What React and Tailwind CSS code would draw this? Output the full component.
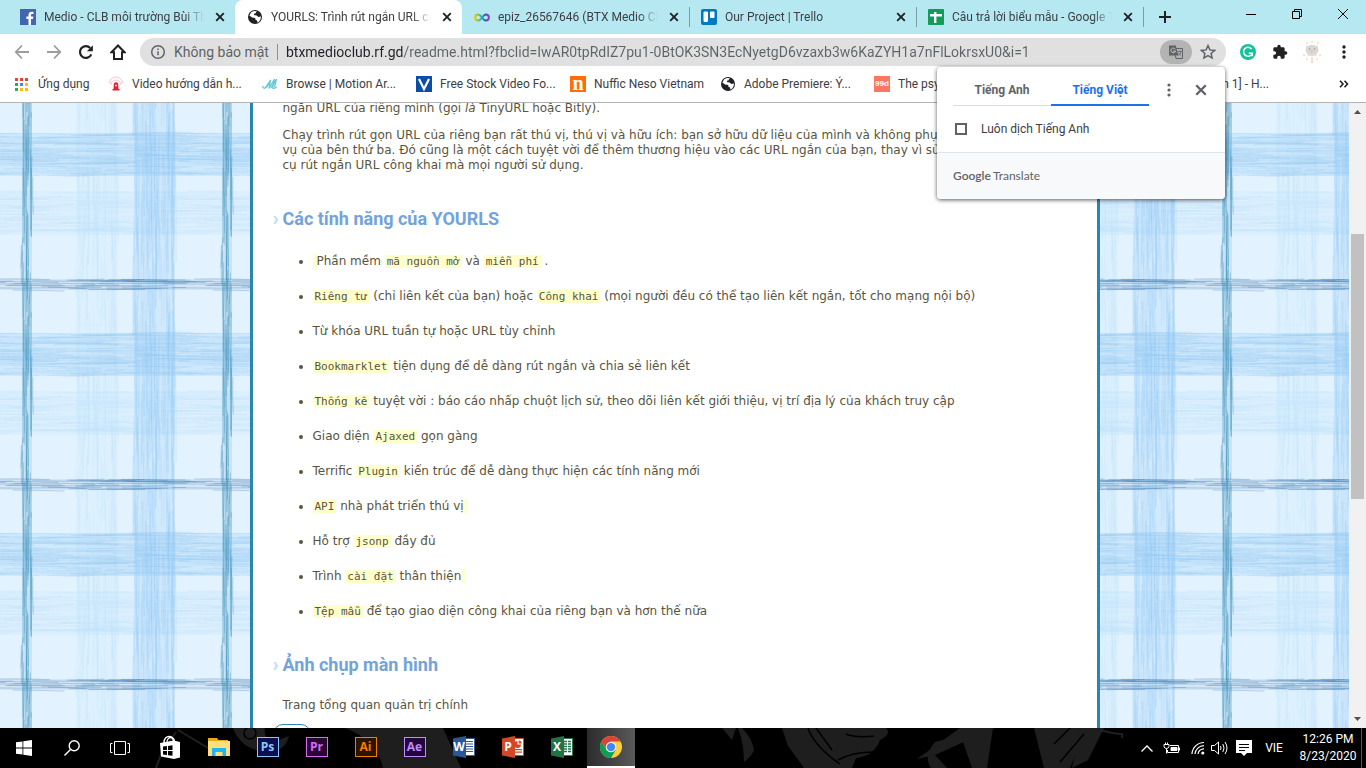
import React from 'react';

const UI = "font-['Roboto','Noto_Sans',sans-serif]";

/* ---------- plaid page background ---------- */

function makeRandom(seed) {
  let s = seed;
  return () => {
    s = (s * 16807) % 2147483647;
    return s / 2147483647;
  };
}

const BANDS = [
  { vertical: false, from: 88, to: 132, color: '#b8e0fc', count: 90, opacity: 0.18, width: 1.4, base: 0.16 },
  { vertical: true, from: 76, to: 118, color: '#b8e0fc', count: 80, opacity: 0.2, width: 1.4, base: 0.12 },
  { vertical: false, from: 30, to: 73, color: '#8ac3f0', count: 170, opacity: 0.18, width: 1.2, base: 0.22 },
  { vertical: true, from: 134, to: 175, color: '#8ac3f0', count: 150, opacity: 0.19, width: 1.3, base: 0.2 },
  { vertical: false, from: 176, to: 187, color: '#4a82b4', count: 34, opacity: 0.32, width: 1.1, base: 0.1 },
  { vertical: true, from: 22, to: 32, color: '#3a90ba', count: 34, opacity: 0.34, width: 1.2, base: 0.14 },
];

function buildStrokes() {
  const rand = makeRandom(4217);
  const out = [];
  BANDS.forEach((b, bi) => {
    for (let i = 0; i < b.count; i++) {
      const start = rand() * 200;
      const len = 30 + rand() * 60;
      const across = b.from + rand() * (b.to - b.from);
      const drift = (rand() - 0.5) * 3;
      const mid = across + drift / 2 + (rand() - 0.5) * 2;
      const wave = Math.sin((start / 200) * Math.PI * 2);
      [0, -200].forEach((shift) => {
        const a = start + shift;
        const c = across + wave;
        const d = b.vertical
          ? `M${c} ${a}Q${mid + wave} ${a + len / 2} ${c + drift} ${a + len}`
          : `M${a} ${c}Q${a + len / 2} ${mid + wave} ${a + len} ${c + drift}`;
        out.push({ key: `${bi}-${i}-${shift}`, d, b });
      });
    }
  });
  return out;
}

const STROKES = buildStrokes();

function Plaid() {
  return (
    <svg className="absolute inset-0 h-full w-full" aria-hidden="true">
      <defs>
        <pattern id="plaid" width="200" height="200" patternUnits="userSpaceOnUse">
          <rect width="200" height="200" fill="#e2f2ff" />
          {BANDS.map((b, i) =>
            b.vertical ? (
              <rect key={i} x={b.from} y="0" width={b.to - b.from} height="200" fill={b.color} opacity={b.base} />
            ) : (
              <rect key={i} x="0" y={b.from} width="200" height={b.to - b.from} fill={b.color} opacity={b.base} />
            )
          )}
          {STROKES.map((s) => (
            <path key={s.key} d={s.d} fill="none" stroke={s.b.color} strokeWidth={s.b.width} opacity={s.b.opacity} />
          ))}
        </pattern>
      </defs>
      <rect width="100%" height="100%" fill="url(#plaid)" />
    </svg>
  );
}

/* ---------- small icons ---------- */

function Globe() {
  return (
    <svg viewBox="0 0 16 16" className="size-4 shrink-0" aria-hidden="true">
      <circle cx="8" cy="8" r="7" fill="#202124" />
      <path d="M4.2 3.2C6 2 8.6 1.8 10 2.4L9.6 4 7.4 4.6 6.8 6 9.6 6.6 11.4 8 14 7.6C14 10 13 12.6 10.6 13.8L10 11.6 8.4 10.8 8.2 9 5 8.4 2.4 6.6Z" fill="#fff" />
      <path d="M8.6 2.2l2.6 1.2 1.6 2.4-2.6.4-1-1.6zM2.2 8.6l2.4 1.6 1.2 3.2-2.4-1.6z" fill="#202124" />
    </svg>
  );
}

function Facebook() {
  return (
    <svg viewBox="0 0 16 16" className="size-4 shrink-0" aria-hidden="true">
      <rect width="16" height="16" fill="#4267b2" />
      <path d="M11 16V10h2l.4-2.4H11V6.200c0-.8.4-1.200 1.200-1.200h1.300V2.900c-.4 0-1-.1-1.700-.1-2 0-3.300 1.200-3.300 3.200v1.600H6.400V10h2.100v6z" fill="#fff" />
    </svg>
  );
}

function Infinity() {
  return (
    <svg viewBox="0 0 16 16" className="size-4 shrink-0" aria-hidden="true">
      <defs>
        <linearGradient id="inf" x1="0" x2="1">
          <stop offset="0" stopColor="#f2c500" />
          <stop offset=".25" stopColor="#7cc142" />
          <stop offset=".5" stopColor="#18a8d8" />
          <stop offset=".75" stopColor="#3b4fb0" />
          <stop offset="1" stopColor="#a03cc0" />
        </linearGradient>
      </defs>
      <path d="M8 8.500C6.800 6.600 5.600 5.400 4.200 5.400a3 3 0 0 0 0 6.200C5.600 11.600 6.800 10.400 8 8.500s2.400-3.100 3.800-3.100a3 3 0 0 1 0 6.200C10.400 11.600 9.200 10.400 8 8.500z" fill="none" stroke="url(#inf)" strokeWidth="2" />
    </svg>
  );
}

function Trello() {
  return (
    <svg viewBox="0 0 16 16" className="size-4 shrink-0" aria-hidden="true">
      <rect width="16" height="16" rx="2" fill="#0079bf" />
      <rect x="2.500" y="2.500" width="4.500" height="10.500" rx="1" fill="#fff" />
      <rect x="9" y="2.500" width="4.500" height="6.500" rx="1" fill="#fff" />
    </svg>
  );
}

function Sheets() {
  return (
    <svg viewBox="0 0 16 16" className="size-4 shrink-0" aria-hidden="true">
      <rect width="16" height="16" rx="1" fill="#0f9d58" />
      <path d="M2 5h12v2.400H8.400V14H6V7.400H2zM6 3h2.400v3H6z" fill="#fff" />
    </svg>
  );
}

const CloseX = ({ className = 'size-4' }) => (
  <svg viewBox="0 0 16 16" className={className} fill="none" stroke="currentColor" strokeWidth="1.900" aria-hidden="true">
    <path d="M4.200 4.200l7.600 7.600M11.800 4.200l-7.600 7.600" />
  </svg>
);

/* ---------- tab strip ---------- */

const TABS = [
  { title: 'Medio - CLB môi trường Bùi Thị Xuân', Icon: Facebook },
  { title: 'YOURLS: Trình rút ngắn URL của riêng bạn', Icon: Globe, active: true },
  { title: 'epiz_26567646 (BTX Medio Club)', Icon: Infinity },
  { title: 'Our Project | Trello', Icon: Trello, divider: true },
  { title: 'Câu trả lời biểu mẫu - Google Trang tính', Icon: Sheets, divider: true },
];

function Tab({ title, Icon, active, divider }) {
  return (
    <div
      className={
        'relative flex h-full w-[227px] items-center gap-2 pr-[7px] pl-3 ' +
        (active ? 'rounded-t-lg bg-white' : 'bg-transparent')
      }
    >
      {divider && <span className="absolute left-0 h-5 w-px bg-[#7f9ca3]" />}
      <Icon />
      <span className="min-w-0 flex-1 overflow-hidden text-xs whitespace-nowrap text-[#3c4043] [mask-image:linear-gradient(to_right,black_88%,transparent)]">
        {title}
      </span>
      <button type="button" aria-label="Đóng thẻ" className="text-[#202124]">
        <CloseX />
      </button>
    </div>
  );
}

function TabStrip() {
  return (
    <div className="flex h-[34px] shrink-0 bg-[#b6e8f2]">
      <div className="flex pl-2">
        {TABS.map((t) => (
          <Tab key={t.title} {...t} />
        ))}
      </div>
      <span className="h-5 w-px self-center bg-[#7f9ca3]" />
      <button type="button" aria-label="Thẻ mới" className="flex w-[42px] items-center justify-center">
        <svg viewBox="0 0 14 14" className="size-3.5" stroke="#202124" strokeWidth="2" aria-hidden="true">
          <path d="M7 1v12M1 7h12" />
        </svg>
      </button>
      <div className="ml-auto flex pb-1.5">
        <button type="button" aria-label="Thu nhỏ" className="flex w-[46px] items-center justify-center">
          <svg viewBox="0 0 10 10" className="size-2.5" stroke="#000" aria-hidden="true"><path d="M0 5.500h10" /></svg>
        </button>
        <button type="button" aria-label="Khôi phục" className="flex w-[46px] items-center justify-center">
          <svg viewBox="0 0 10 10" className="size-2.5" fill="none" stroke="#000" aria-hidden="true">
            <path d="M.5 2.500h7v7h-7zM2.500 2.500v-2h7v7h-2" />
          </svg>
        </button>
        <button type="button" aria-label="Đóng" className="flex w-[46px] items-center justify-center">
          <svg viewBox="0 0 10 10" className="size-2.5" stroke="#000" aria-hidden="true"><path d="M0 0l10 10M10 0L0 10" /></svg>
        </button>
      </div>
    </div>
  );
}

/* ---------- toolbar ---------- */

function NavButton({ label, children }) {
  return (
    <button type="button" aria-label={label} className="flex size-8 items-center justify-center">
      {children}
    </button>
  );
}

function Toolbar() {
  return (
    <div className="flex h-9 shrink-0 items-center bg-white px-[6px]">
      <NavButton label="Quay lại">
        <svg viewBox="0 0 16 16" className="size-4" fill="none" stroke="#9b9c9e" strokeWidth="1.800" aria-hidden="true"><path d="M15 8H2.500M8 1.500L1.800 8 8 14.500" /></svg>
      </NavButton>
      <NavButton label="Tiến">
        <svg viewBox="0 0 16 16" className="size-4" fill="none" stroke="#9b9c9e" strokeWidth="1.800" aria-hidden="true"><path d="M1 8h12.500M8 1.500L14.200 8 8 14.500" /></svg>
      </NavButton>
      <NavButton label="Tải lại">
        <svg viewBox="0 0 16 16" className="size-4" fill="none" stroke="#202124" strokeWidth="2.200" aria-hidden="true">
          <path d="M13.300 10.400A5.900 5.900 0 1 1 12.200 4" />
          <path d="M14.900 1.200v6H8.900z" fill="#202124" stroke="none" />
        </svg>
      </NavButton>
      <NavButton label="Trang chủ">
        <svg viewBox="0 0 16 16" className="size-4" fill="none" stroke="#202124" strokeWidth="2" aria-hidden="true"><path d="M8 1.500L1.400 8.300H4V15h8V8.300h2.600z" /></svg>
      </NavButton>
      <div className="ml-[6px] flex h-7 min-w-0 flex-1 items-center rounded-full bg-[#e0e0e0] pr-[2px] pl-[10px] text-sm whitespace-nowrap text-[#5f6368]">
        <svg viewBox="0 0 16 16" className="size-4 shrink-0" fill="none" stroke="#5f6368" strokeWidth="1.500" aria-hidden="true">
          <circle cx="8" cy="8" r="6.300" />
          <path d="M8 7.200v4M8 4.600v1.500" />
        </svg>
        <span className="ml-2">Không bảo mật</span>
        <span className="mx-2 h-4 w-px shrink-0 bg-[#8e9194]" />
        <input
          aria-label="Địa chỉ"
          readOnly
          className="h-7 min-w-0 flex-1 bg-[linear-gradient(to_right,#202124_118px,#5f6368_118px)] bg-clip-text text-transparent outline-none"
          defaultValue="btxmedioclub.rf.gd/readme.html?fbclid=IwAR0tpRdIZ7pu1-0BtOK3SN3EcNyetgD6vzaxb3w6KaZYH1a7nFlLokrsxU0&i=1"
        />
        <button type="button" aria-label="Dịch trang này" className="flex h-6 w-8 shrink-0 items-center justify-center rounded-full bg-[#b3b3b3]">
          <svg viewBox="0 0 16 16" className="size-4" aria-hidden="true">
            <path d="M6 4.500h8.500v10H8z" fill="none" stroke="#5f6368" />
            <path d="M1 1.500h6.800l2.600 10H1z" fill="#5f6368" />
            <path d="M7.300 5.300A2.300 2.300 0 1 0 7.500 7H5.300" fill="none" stroke="#c9c9c9" />
            <path d="M9.700 7.500h4M11.700 6.500v1M10.300 11.500c1.500-1 2.300-2.200 2.600-4M10.600 9l2.400 2.600" fill="none" stroke="#5f6368" strokeWidth=".8" />
          </svg>
        </button>
        <button type="button" aria-label="Đánh dấu trang" className="flex size-8 shrink-0 items-center justify-center">
          <svg viewBox="0 0 16 16" className="size-4" fill="none" stroke="#5f6368" strokeWidth="1.500" aria-hidden="true">
            <path d="M8 1.600l1.900 4.300 4.700.5-3.500 3.100 1 4.600L8 11.700l-4.100 2.400 1-4.600L1.400 6.400l4.700-.5z" />
          </svg>
        </button>
      </div>
      <div className="ml-[6px] flex">
        <NavButton label="Grammarly">
          <svg viewBox="0 0 16 16" className="size-4" aria-hidden="true">
            <circle cx="8" cy="8" r="8" fill="#15c39a" />
            <path d="M11.600 5A4.500 4.500 0 1 0 12.300 9.200H8.800M12.300 9v3.200" fill="none" stroke="#fff" strokeWidth="1.500" />
          </svg>
        </NavButton>
        <NavButton label="Tiện ích">
          <svg viewBox="0 0 24 24" className="size-4" fill="#202124" aria-hidden="true">
            <path d="M20.500 11H19V7c0-1.100-.9-2-2-2h-4V3.500a2.500 2.500 0 0 0-5 0V5H4c-1.100 0-2 .9-2 2v3.800h1.500a2.700 2.700 0 0 1 0 5.400H2V20c0 1.100.9 2 2 2h3.800v-1.500a2.700 2.700 0 0 1 5.400 0V22H17c1.100 0 2-.9 2-2v-4h1.500a2.500 2.500 0 0 0 0-5z" />
          </svg>
        </NavButton>
        <NavButton label="Hồ sơ">
          <svg viewBox="0 0 20 22" className="h-[22px] w-5" aria-hidden="true">
            <path d="M4 4l3 2h6l3-2v6l-2 5H6L4 10z" fill="#e2e0e0" />
            <ellipse cx="10" cy="9" rx="6.500" ry="5" fill="#d9d6d6" />
            <circle cx="7.500" cy="8" r=".8" fill="#a5a2a2" /><circle cx="12.500" cy="8" r=".8" fill="#a5a2a2" />
            <circle cx="5.500" cy="10" r="1" fill="#f6cfd0" /><circle cx="14.500" cy="10" r="1" fill="#f6cfd0" />
            <path d="M9 10q1 1 2 0" stroke="#eb9aa0" fill="none" strokeWidth=".8" />
            <g fill="#f8e3a4"><circle cx="5" cy="2" r="1" /><circle cx="10" cy="1" r="1" /><circle cx="16" cy="2" r="1" /><circle cx="2" cy="14" r="1" /><circle cx="5" cy="18" r="1" /><circle cx="15" cy="18" r="1" /><circle cx="18" cy="14" r="1" /></g>
            <path d="M10 16v5M9 21h2" stroke="#f3c1bf" />
          </svg>
        </NavButton>
        <NavButton label="Tùy chỉnh">
          <svg viewBox="0 0 16 16" className="size-4" fill="#202124" aria-hidden="true">
            <circle cx="8" cy="3" r="1.700" /><circle cx="8" cy="8" r="1.700" /><circle cx="8" cy="13" r="1.700" />
          </svg>
        </NavButton>
      </div>
    </div>
  );
}

/* ---------- bookmarks ---------- */

function AppsIcon() {
  const colors = ['#ea4335', '#ea4335', '#ea4335', '#34a853', '#4285f4', '#fbbc05', '#34a853', '#fbbc05', '#fbbc05'];
  return (
    <svg viewBox="0 0 13 13" className="size-[13px] shrink-0" aria-hidden="true">
      {colors.map((c, i) => (
        <rect key={i} x={(i % 3) * 5} y={Math.floor(i / 3) * 5} width="3" height="3" fill={c} />
      ))}
    </svg>
  );
}

const BeaconIcon = () => (
  <svg viewBox="0 0 16 16" className="size-4 shrink-0" aria-hidden="true">
    <path d="M5.500 14l.3-5.500a2.200 2.200 0 0 1 4.400 0l.3 5.500z" fill="#ec1c2e" />
    <path d="M4.500 13h7v1.500h-7z" fill="#ec1c2e" />
    <circle cx="8" cy="9.500" r=".9" fill="#fff" />
    <path d="M3 9a5 5 0 0 1 10 0M1.500 7.500a6.500 6.500 0 0 1 13 0" fill="none" stroke="#f9c4c7" />
  </svg>
);

const ScriptMIcon = () => (
  <svg viewBox="0 0 16 16" className="size-4 shrink-0" fill="none" stroke="#63c8d8" strokeWidth="1.300" aria-hidden="true">
    <path d="M1 10c-.6 2 1.500 3 3 1L8.500 4 7 12.500 12.500 3 10.600 11.500c0 1.500 2 1 4-.5M3 12c2 .5 3-3 5.500-8" />
    <path d="M9 12L14.500 3l-2 8" />
  </svg>
);

const VIcon = () => (
  <svg viewBox="0 0 16 16" className="size-4 shrink-0" aria-hidden="true">
    <rect width="16" height="16" fill="#0a4fa3" />
    <path d="M3 3l5 10 5-10" fill="none" stroke="#fff" strokeWidth="2.200" />
  </svg>
);

const NIcon = () => (
  <span className="flex size-4 shrink-0 items-center justify-center bg-[#ff6c0a] pb-[3px] font-['Liberation_Serif',serif] text-xl leading-4 font-bold text-white">n</span>
);

const NinetyNineIcon = () => (
  <span className="flex size-4 shrink-0 items-center justify-center bg-[#fe7663] font-['Liberation_Sans',sans-serif] text-[8px] leading-4 font-bold text-white">99d</span>
);

const BOOKMARKS = [
  { label: 'Video hướng dẫn h...', Icon: BeaconIcon, width: 'w-[154px]' },
  { label: 'Browse | Motion Ar...', Icon: ScriptMIcon, width: 'w-[154px]' },
  { label: 'Free Stock Video Fo...', Icon: VIcon, width: 'w-[154px]' },
  { label: 'Nuffic Neso Vietnam', Icon: NIcon, width: 'w-[150px]' },
  { label: 'Adobe Premiere: Ý...', Icon: Globe, width: 'w-[154px]' },
  { label: 'The psychology of...', Icon: NinetyNineIcon, width: 'w-[154px]' },
];

function BookmarkBar() {
  return (
    <nav aria-label="Dấu trang" className="flex h-8 shrink-0 items-center bg-white pb-1 pl-[15px] text-xs whitespace-nowrap text-[#3c4043]">
      <a href="#apps" className="flex w-[93px] items-center gap-2.5">
        <AppsIcon />
        Ứng dụng
      </a>
      {BOOKMARKS.map(({ label, Icon, width }) => (
        <a key={label} href="#bookmark" className={'flex items-center gap-2 ' + width}>
          <Icon />
          {label}
        </a>
      ))}
      <a href="#bookmark" className="ml-auto">[Phần 1] - H...</a>
      <button type="button" aria-label="Dấu trang khác" className="ml-[52px] flex w-[45px] justify-center">
        <svg viewBox="0 0 10 8" className="h-2 w-2.5" fill="none" stroke="#202124" strokeWidth="1.600" aria-hidden="true">
          <path d="M1 .8L4 4 1 7.200M5.500.8l3 3.200-3 3.200" />
        </svg>
      </button>
    </nav>
  );
}

/* ---------- translate popup ---------- */

function TranslatePopup() {
  return (
    <section
      aria-label="Google Translate"
      className="absolute top-[67px] right-[141px] z-10 w-72 rounded-sm bg-white text-xs text-[#3c4043] shadow-[0_1px_4px_rgba(0,0,0,0.65)]"
    >
      <div className="flex h-[39px] items-stretch pl-4">
        <button type="button" className="w-[98px] border-b border-[#dadce0] pt-2 font-bold text-[#5f6368]">Tiếng Anh</button>
        <button type="button" className="w-[98px] border-b-2 border-[#1a73e8] pt-2 font-bold text-[#1a73e8]">Tiếng Việt</button>
        <button type="button" aria-label="Tùy chọn" className="flex w-10 items-center justify-center pt-1.5">
          <svg viewBox="0 0 16 16" className="size-4" fill="#5f6368" aria-hidden="true">
            <circle cx="8" cy="3" r="1.600" /><circle cx="8" cy="8" r="1.600" /><circle cx="8" cy="13" r="1.600" />
          </svg>
        </button>
        <button type="button" aria-label="Đóng" className="flex w-6 items-center justify-center pt-1.5 text-[#5f6368]">
          <CloseX className="size-5" />
        </button>
      </div>
      <label className="flex h-[46px] items-center gap-3.5 pl-[18px]">
        <input type="checkbox" className="size-3 appearance-none border-2 border-[#5f6368]" />
        Luôn dịch Tiếng Anh
      </label>
      <div className="flex h-[47px] items-center gap-0.5 rounded-b-sm border-t border-[#e3e5e8] bg-[#f8f9fa] pl-4 font-['Lato',sans-serif] text-xs text-[#5f6368]">
        <span className="font-semibold">Google</span>
        <span>Translate</span>
      </div>
    </section>
  );
}

/* ---------- page ---------- */

const Code = ({ children }) => (
  <code className="bg-[#ffffcc] px-[2px] font-['DejaVu_Sans_Mono',monospace] text-[11px]">{children}</code>
);

const Gap = () => <span className="bg-[#ffffcc] px-[2px]" />;

const FEATURES = [
  <><Gap /> Phần mềm <Code>mã nguồn mở</Code> và <Code>miễn phí</Code> .</>,
  <><Code>Riêng tư</Code> (chỉ liên kết của bạn) hoặc <Code>Công khai</Code> (mọi người đều có thể tạo liên kết ngắn, tốt cho mạng nội bộ)</>,
  <>Từ khóa URL tuần tự hoặc URL tùy chỉnh</>,
  <><Code>Bookmarklet</Code> tiện dụng để dễ dàng rút ngắn và chia sẻ liên kết</>,
  <><Code>Thống kê</Code> tuyệt vời : báo cáo nhấp chuột lịch sử, theo dõi liên kết giới thiệu, vị trí địa lý của khách truy cập</>,
  <>Giao diện <Code>Ajaxed</Code> gọn gàng</>,
  <>Terrific <Code>Plugin</Code> kiến trúc để dễ dàng thực hiện các tính năng mới</>,
  <><Code>API</Code> nhà phát triển thú vị<Gap /></>,
  <>Hỗ trợ <Code>jsonp</Code> đầy đủ</>,
  <>Trình <Code>cài đặt</Code> thân thiện<Gap /></>,
  <><Code>Tệp mẫu</Code> để tạo giao diện công khai của riêng bạn và hơn thế nữa</>,
];

function Heading({ children }) {
  return (
    <h2 className="flex font-['Roboto',sans-serif] text-lg leading-6 font-bold text-[#73a3da]">
      <span className="w-[10px] text-xl leading-[22px] font-black text-[#bde0fb]">›</span>
      {children}
    </h2>
  );
}

function Page() {
  return (
    <div className="relative min-w-0 flex-1 overflow-hidden bg-[#e2f2ff]">
      <Plaid />
      <main className="relative mx-auto h-full max-w-[850px] overflow-hidden border-x-[3px] border-[#2a85b3] bg-white px-5 font-['DejaVu_Sans',Verdana,sans-serif] text-xs leading-[15px] text-[#595441]">
        <div className="-mt-0.5 pl-[10px]">
          <p>
            ngắn URL của riêng mình (gọi <em>là</em> TinyURL hoặc Bitly).
          </p>
          <p className="mt-3 whitespace-nowrap">
            Chạy trình rút gọn URL của riêng bạn rất thú vị, thú vị và hữu ích: bạn sở hữu dữ liệu của mình và không phụ thuộc vào dịch
            <br />
            vụ của bên thứ ba. Đó cũng là một cách tuyệt vời để thêm thương hiệu vào các URL ngắn của bạn, thay vì sử dụng cùng một công
            <br />
            cụ rút ngắn URL công khai mà mọi người sử dụng.
          </p>
        </div>
        <div className="pt-[34px]">
          <Heading>Các tính năng của YOURLS</Heading>
        </div>
        <ul className="list-disc pt-[13px] pl-10">
          {FEATURES.map((f, i) => (
            <li key={i} className="py-[10px]">{f}</li>
          ))}
        </ul>
        <div className="pt-6">
          <Heading>Ảnh chụp màn hình</Heading>
        </div>
        <p className="pt-[21px] pl-[10px]">Trang tổng quan quản trị chính</p>
        <div className="mt-[11px] h-10 w-[38px] rounded-[10px] border border-[#2a85b3]" />
      </main>
    </div>
  );
}

function Scrollbar() {
  return (
    <div className="flex w-[17px] shrink-0 flex-col items-center bg-[#f1f1f1]">
      <svg viewBox="0 0 17 17" className="size-[17px]" fill="#505050" aria-hidden="true"><path d="M5 11h7L8.500 7z" /></svg>
      <div className="h-[114px]" />
      <div className="h-[265px] w-[13px] bg-[#c1c1c1]" />
      <svg viewBox="0 0 17 17" className="mt-auto size-[17px]" fill="#505050" aria-hidden="true"><path d="M5 6h7L8.500 10z" /></svg>
    </div>
  );
}

/* ---------- taskbar ---------- */

function TaskbarArt() {
  return (
    <svg className="absolute inset-0 h-full w-full" viewBox="0 0 1366 40" preserveAspectRatio="xMidYMid slice" aria-hidden="true">
      <rect width="1366" height="40" fill="#000" />
      <g fill="#1e1e1e">
        <path d="M233 0h32q-2 10 8 14l16-6q-4 16-22 16-26-2-34-24zM345 0h98l18 40h-78q-6-28-38-40z" />
        <path d="M722 0h14l-4 12zM738 0q6 16 6 34 8-6 10-12-2-12-12-22zM782 0h26q4 14 30 34l2 6h-36q-10-14-16-22z" />
        <path d="M808 0h78q6 6-6 12-6 16-24 18l-4 10h-14q-28-20-30-40zM960 0h35L935 27l-18 4zM935 14l18-5q-16 12-20 16l14 15h-16q-8-12 4-26zM961 8l32-8-6 40H972zM1034 0h52l-16 40h-26z" />
        <path d="M1080 0h24l-16 32-16 8z" />
      </g>
      <g fill="none" stroke="#000" strokeWidth="1.500">
        <path d="M816 0l16 22M808 0q6 18 32 36M838 32q14-8 36-8M846 6q10 4 28 2M1054 16l20-20M1060 34l24-28" />
        <circle cx="250" cy="5" r="6" />
      </g>
      <path d="M1100 2q14 4 22 4v4M176 4l-14 20-6 16M178 2l30 18" fill="none" stroke="#202020" strokeWidth="2" />
    </svg>
  );
}

function AdobeIcon({ text, className }) {
  return (
    <span className={"flex h-5 w-[22px] items-center justify-center border font-['Open_Sans',sans-serif] text-xs leading-none font-bold " + className}>
      {text}
    </span>
  );
}

function OfficeIcon({ letter, color, kind }) {
  return (
    <span className="relative flex size-[22px] items-center">
      <svg viewBox="0 0 22 22" className="absolute inset-0 size-[22px]" aria-hidden="true">
        <rect x="11" y="2.500" width="10.500" height="17" fill="#fff" stroke={color} strokeWidth=".8" />
        {kind === 'lines' && <path d="M13 5.500h7M13 8h7M13 10.500h7M13 13h7M13 15.500h7" stroke={color} strokeWidth="1.200" />}
        {kind === 'chart' && (
          <g fill={color}>
            <path d="M13 13h7v1.200h-7zM13 15.600h7v1.200h-7z" />
            <path d="M15.500 5v3.500H19A3.500 3.500 0 1 1 15.500 5z" />
            <path d="M16.700 4.500A3.200 3.200 0 0 1 19.800 7.400h-3.100z" />
          </g>
        )}
        {kind === 'grid' && <path d="M13 5.500h7M13 8h7M13 10.500h7M13 13h7M13 15.500h7" stroke={color} strokeWidth="1.600" strokeDasharray="3 1" />}
        <path d="M0 2.500L13 0v22L0 19.500z" fill={color} />
      </svg>
      <span className="relative w-[13px] text-center font-['Open_Sans',sans-serif] text-xs leading-none font-bold text-white">{letter}</span>
    </span>
  );
}

const APPS = [
  {
    name: 'Store',
    icon: (
      <svg viewBox="0 0 22 24" className="h-6 w-[22px]" aria-hidden="true">
        <path d="M5 8C5 3 8 1.500 10 1.500S14 3 14.500 6" fill="none" stroke="#fff" strokeWidth="1.500" />
        <path d="M8 7c0-3 2-4.500 4-4.500s3.500 2 3.500 4" fill="none" stroke="#fff" strokeWidth="1.300" />
        <path d="M1 8l14-2.500V24L2 21.500zM15 5.500L21 7v15.500L15 24z" fill="#fff" />
        <path d="M4 11.500l4-.5v4H4zM9 10.900l4.500-.6V15H9zM4 16h4v4l-4-.5zM9 16h4.500v4.800L9 20.200z" fill="#000" />
      </svg>
    ),
  },
  {
    name: 'File Explorer',
    icon: (
      <svg viewBox="0 0 22 20" className="h-5 w-[22px]" aria-hidden="true">
        <path d="M0 1h9l1.500 2H20v4H0z" fill="#e9a91f" />
        <path d="M0 4h22v15H0z" fill="#ffdf7a" />
        <path d="M4 19v-8h14v8h-3.500v-4h-7v4z" fill="#1fb5f2" />
      </svg>
    ),
  },
  { name: 'Photoshop', icon: <AdobeIcon text="Ps" className="border-[#8bc7fa] bg-[#0c0f50] text-[#8bc7fa]" /> },
  { name: 'Premiere', icon: <AdobeIcon text="Pr" className="border-[#d86bf0] bg-[#2a0634] text-[#d86bf0]" /> },
  { name: 'Illustrator', icon: <AdobeIcon text="Ai" className="border-[#f57c00] bg-[#2b1400] text-[#f57c00]" /> },
  { name: 'After Effects', icon: <AdobeIcon text="Ae" className="border-[#c28bf5] bg-[#200740] text-[#c28bf5]" /> },
  { name: 'Word', icon: <OfficeIcon letter="W" color="#2b579a" kind="lines" /> },
  { name: 'PowerPoint', icon: <OfficeIcon letter="P" color="#d24726" kind="chart" /> },
  { name: 'Excel', icon: <OfficeIcon letter="X" color="#217346" kind="grid" /> },
];

function ChromeIcon() {
  return (
    <svg viewBox="0 0 48 48" className="size-[22px]" aria-hidden="true">
      <circle cx="24" cy="24" r="24" fill="#ffcd40" />
      <path d="M3.200 12A24 24 0 0 1 44.800 12H24L13.600 30z" fill="#db4437" />
      <path d="M3.200 12A24 24 0 0 0 24 48L34.400 30 24 34.500 13.600 30z" fill="#0f9d58" />
      <circle cx="24" cy="24" r="11.500" fill="#f1f1f1" />
      <circle cx="24" cy="24" r="9" fill="#4285f4" />
    </svg>
  );
}

function Taskbar() {
  return (
    <footer className="relative h-10 shrink-0 bg-black text-white">
      <TaskbarArt />
      <div className="relative flex h-full items-center">
        <button type="button" aria-label="Start" className="flex h-full w-12 items-center justify-center">
          <svg viewBox="0 0 16 16" className="size-4" fill="#fff" aria-hidden="true">
            <path d="M0 2.300l6.500-.9v6.200H0zM7.300 1.300L16 0v7.600H7.300zM0 8.400h6.500v6.200L0 13.700zM7.300 8.400H16V16l-8.700-1.300z" />
          </svg>
        </button>
        <button type="button" aria-label="Tìm kiếm" className="flex h-full w-12 items-center justify-center">
          <svg viewBox="0 0 16 16" className="size-4" fill="none" stroke="#fff" strokeWidth="1.400" aria-hidden="true">
            <circle cx="10.200" cy="5.800" r="5" /><path d="M6.500 9.500L.5 15.500" />
          </svg>
        </button>
        <button type="button" aria-label="Xem tác vụ" className="flex h-full w-12 items-center justify-center">
          <svg viewBox="0 0 20 14" className="h-3.5 w-5" fill="none" stroke="#fff" aria-hidden="true">
            <path d="M4.500.5h11v13h-11zM2.500 2.500h-2v9h2M17.500 2.500h2v9h-2" />
          </svg>
        </button>
        <div className="flex h-full pl-px pb-0.5">
          {APPS.map((a) => (
            <button key={a.name} type="button" aria-label={a.name} className="flex h-full w-[49px] items-center justify-center">
              {a.icon}
            </button>
          ))}
        </div>
        <button type="button" aria-label="Chrome" className="ml-px flex h-full w-12 items-center justify-center border-b-2 border-white bg-gradient-to-r from-[#2c2c2c] to-[#5a5a5a]">
          <ChromeIcon />
        </button>
        <div className="ml-auto flex h-full items-center">
          <svg viewBox="0 0 12 7" className="h-[7px] w-3" fill="none" stroke="#fff" strokeWidth="1.300" aria-hidden="true"><path d="M.5 6.500L6 1l5.500 5.500" /></svg>
          <svg viewBox="0 0 18 14" className="ml-2.5 h-3.5 w-[18px]" fill="none" stroke="#fff" aria-hidden="true">
            <path d="M7 4.500h8.500v7h-11V9" /><path d="M8 6.500h6v3H8z" fill="#fff" /><path d="M16.500 6.500v3" />
            <path d="M1 3.500h5v2q-.5 2-2.500 2T1 5.500zM2.500 3.500v-2M4.500 3.500v-2M3.500 7.500v5" />
          </svg>
          <svg viewBox="0 0 14 14" className="ml-2.5 size-3.5" fill="none" stroke="#fff" strokeWidth="1.200" aria-hidden="true">
            <path d="M1 13A12 12 0 0 1 13 1.500M4 13A9 9 0 0 1 13 4.700M7 13a6 6 0 0 1 6-5.200" /><circle cx="11.800" cy="12" r="1.600" fill="#fff" stroke="none" />
          </svg>
          <svg viewBox="0 0 17 14" className="ml-1.5 h-3.5 w-[17px]" fill="none" stroke="#fff" aria-hidden="true">
            <path d="M.5 4.500h3l4-3.500v12l-4-3.500h-3zM9.500 5q1 2 0 4M11.800 3q2.500 4 0 8M14 1q4 6 0 12" />
          </svg>
          <svg viewBox="0 0 16 16" className="ml-2 size-4" aria-hidden="true">
            <path d="M0 0h16v13h-5l-3 3-3-3H0z" fill="#fff" /><path d="M3 4.500h10M3 7.500h10M3 10.500h6" stroke="#000" />
          </svg>
          <span className="w-[44px] text-center text-xs">VIE</span>
          <time className="w-16 text-center text-xs leading-[17px]">
            12:26 PM
            <br />
            8/23/2020
          </time>
          <span className="ml-px h-full w-[5px] border-l border-[#555]" />
        </div>
      </div>
    </footer>
  );
}

export default function App() {
  return (
    <div className={'relative flex h-screen flex-col overflow-hidden bg-white ' + UI}>
      <TabStrip />
      <Toolbar />
      <BookmarkBar />
      <TranslatePopup />
      <div className="flex min-h-0 flex-1 border-t border-[#b3b3b3]">
        <Page />
        <Scrollbar />
      </div>
      <Taskbar />
    </div>
  );
}
